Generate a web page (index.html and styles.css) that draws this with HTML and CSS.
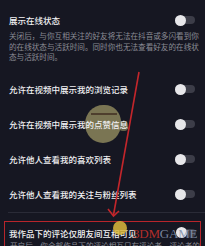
FILE: index.html
```html
<!DOCTYPE html>
<html lang="zh">
<head>
<meta charset="utf-8">
<link rel="stylesheet" href="styles.css">
</head>
<body>
<div class="page">
  <section class="intro">
    <div class="row head"><span class="title">展示在线状态</span><span class="toggle"></span></div>
    <p class="desc">关闭后，与你互相关注的好友将无法在抖音或多闪看到你的在线状态与活跃时间。同时你也无法查看好友的在线状态与活跃时间。</p>
  </section>
  <div class="list">
    <div class="row item"><span class="title">允许在视频中展示我的浏览记录</span><span class="toggle"></span></div>
    <div class="row item"><span class="title">允许在视频中展示我的点赞信息</span><span class="toggle"></span></div>
    <div class="row item"><span class="title">允许他人查看我的喜欢列表</span><span class="toggle"></span></div>
    <div class="row item"><span class="title">允许他人查看我的关注与粉丝列表</span><span class="toggle"></span></div>
  </div>
  <div class="divider"></div>
  <section class="boxed">
    <div class="row head"><span class="title">我作品下的评论仅朋友间互相可见</span><span class="toggle"></span></div>
    <p class="desc">开启后，你全部作品下的评论相互只有评论者，评论者的朋友和你可见。</p>
  </section>

  <div class="fish"><span class="fish-band"></span></div>
  <div class="blob"></div>
  <div class="mark"><span class="m3">3DM</span><span class="mg">GAME</span></div>
  <svg class="arrow" width="205" height="246" viewBox="0 0 205 246">
    <line x1="139" y1="72" x2="113.5" y2="215" stroke="#c3262b" stroke-width="1.6"/>
    <polyline points="108,209 113.5,216 119,211" fill="none" stroke="#c3262b" stroke-width="1.6"/>
  </svg>
</div>
</body>
</html>
```

FILE: styles.css
```css
html, body {
  margin: 0;
  padding: 0;
  overflow: hidden;
  background: #161722;
}
.page {
  position: relative;
  width: 205px;
  height: 246px;
  overflow: hidden;
  background: #161722;
  font-family: "Noto Sans CJK SC", "Noto Sans", sans-serif;
}
.row {
  display: flex;
  align-items: center;
  justify-content: space-between;
  padding: 0 10px 0 9px;
}
.title {
  position: relative;
  z-index: 2;
  font-size: 8.5px;
  line-height: 12px;
  color: #f1f1f3;
  font-weight: 500;
  white-space: nowrap;
}
.toggle {
  position: relative;
  width: 20px;
  height: 8px;
  border-radius: 4px;
  background: #3c3d48;
  flex: none;
}
.toggle::before {
  content: "";
  position: absolute;
  left: 0;
  top: -1.5px;
  width: 11px;
  height: 11px;
  border-radius: 50%;
  background: #e7e7ea;
}
.intro {
  padding-top: 14px;
}
.head {
  height: 12px;
}
.desc {
  position: relative;
  z-index: 2;
  margin: 5px 0 0 9px;
  width: 192px;
  font-size: 7.6px;
  line-height: 10.5px;
  color: #8b8c95;
}
.list {
  margin-top: 9px;
}
.item {
  height: 35px;
}
.divider {
  height: 1px;
  margin-left: 8px;
  background: #2a2b37;
}
.boxed {
  margin: 8px 4px 0 4px;
  border: 1.8px solid #b8252b;
  border-bottom: none;
  padding-top: 5px;
  height: 40px;
}
.boxed .row {
  padding: 0 4px 0 4px;
}
.boxed .desc {
  margin: 2px 0 0 5px;
}
.fish {
  position: absolute;
  left: 85px;
  top: 105px;
  width: 36px;
  height: 38px;
  border-radius: 50% 45% 50% 50%;
  background: rgba(140, 134, 92, 0.85);
  z-index: 1;
}
.fish::after {
  content: "";
  position: absolute;
  right: -7px;
  top: 16px;
  width: 9px;
  height: 10px;
  border-radius: 40%;
  background: rgba(120, 116, 82, 0.8);
}
.fish-band {
  position: absolute;
  left: 6px;
  top: 8px;
  width: 26px;
  height: 1.5px;
  background: rgba(60, 40, 30, 0.7);
}
.blob {
  position: absolute;
  left: 113px;
  top: 221px;
  width: 14px;
  height: 14px;
  border-radius: 50%;
  background: rgba(220, 186, 60, 0.85);
  z-index: 3;
}
.mark {
  position: absolute;
  left: 133px;
  top: 226px;
  z-index: 3;
  font-family: "Liberation Serif", serif;
  font-size: 13px;
  line-height: 16px;
  font-weight: 400;
  letter-spacing: -0.2px;
}
.m3 {
  color: rgba(196, 48, 44, 0.9);
}
.mg {
  color: rgba(132, 146, 172, 0.9);
}
.arrow {
  position: absolute;
  left: 0;
  top: 0;
  z-index: 4;
}
```
